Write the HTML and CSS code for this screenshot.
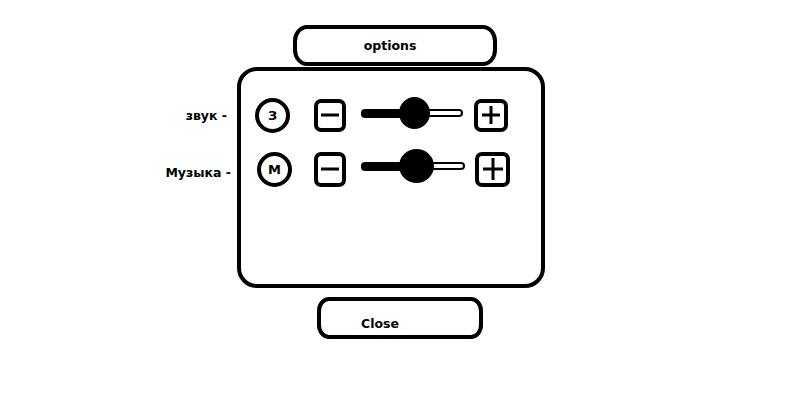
FILE: index.html
```html
<!DOCTYPE html>
<html lang="ru">
<head>
    <meta charset="UTF-8">
    <title>options</title>
    <link rel="stylesheet" href="styles.css">
</head>
<body>

    <div class="screen">
        <div class="btn btn-options">options</div>

        <div class="panel">
            <div class="row">
                <span class="label">звук -</span>
                <span class="badge">З</span>
                <span class="square">
                    <svg width="24" height="24" viewBox="0 0 24 24"><path d="M3 12 H21" stroke="#000" stroke-width="3"/></svg>
                </span>
                <div class="slider">
                    <span class="fill"></span>
                    <span class="knob"></span>
                    <span class="rest"></span>
                </div>
                <span class="square square-plus">
                    <svg width="26" height="24" viewBox="0 0 26 24"><path d="M4 12 H22 M13 3 V21" stroke="#000" stroke-width="3"/></svg>
                </span>
            </div>

            <div class="row row-music">
                <span class="label">Музыка -</span>
                <span class="badge">М</span>
                <span class="square">
                    <svg width="24" height="24" viewBox="0 0 24 24"><path d="M3 12 H21" stroke="#000" stroke-width="3"/></svg>
                </span>
                <div class="slider">
                    <span class="fill"></span>
                    <span class="knob"></span>
                    <span class="rest"></span>
                </div>
                <span class="square square-plus">
                    <svg width="26" height="28" viewBox="0 0 26 28"><path d="M3 14 H23 M13 3 V25" stroke="#000" stroke-width="3"/></svg>
                </span>
            </div>
        </div>

        <div class="btn btn-close">Close</div>
    </div>

</body>
</html>
```

FILE: styles.css
```css
/* options screen */
body { margin: 0; background-color: #ffffff; font-family: 'DejaVu Sans', Tahoma, sans-serif; font-weight: 700; font-size: 12.5px; color: #000; }
.screen { width: 800px; height: 400px; display: flex; flex-direction: column; align-items: flex-start; padding-top: 25px; box-sizing: border-box; }

.btn { box-sizing: border-box; border: 4px solid #000; display: flex; align-items: center; }
.btn-options { margin-left: 293px; width: 204px; height: 41px; border-radius: 14px / 16px; justify-content: center; padding-right: 10px; }
.btn-close { margin-left: 317px; margin-top: 9px; width: 166px; height: 42px; border-radius: 12px / 14px; padding-left: 40px; padding-top: 11px; }

.panel { box-sizing: border-box; margin-left: 237px; margin-top: 1px; width: 308px; height: 221px; border: 4px solid #000; border-radius: 20px; padding: 26px 0 0 14px; display: flex; flex-direction: column; gap: 18px; }

.row { display: flex; align-items: center; height: 36px; }
.label { width: 84px; margin-left: -112px; margin-right: 28px; text-align: right; }
.row-music .label { margin-right: 24px; width: 88px; margin-top: 7px; }
.row-music .badge { margin-left: 2px; }

.badge { box-sizing: border-box; width: 35px; height: 35px; border: 4px solid #000; border-radius: 50%; display: flex; align-items: center; justify-content: center; font-size: 13px; }
.square { box-sizing: border-box; width: 32px; height: 33px; margin-left: 24px; border: 4px solid #000; border-radius: 7px; display: flex; align-items: center; justify-content: center; }
.row-music .square { height: 35px; margin-left: 22px; }
.square-plus { width: 34px; margin-left: 11px; }
.row-music .square-plus { width: 35px; margin-left: 10px; }

.slider { display: flex; align-items: center; width: 102px; margin-left: 15px; margin-top: -4px; }
.row-music .slider { width: 104px; margin-top: -6px; }
.fill { width: 46px; height: 9px; background: #000; border-radius: 4px 0 0 4px; }
.knob { width: 31px; height: 32px; background: #000; border-radius: 50%; margin: 0 -8px; position: relative; z-index: 1; }
.row-music .knob { width: 35px; height: 34px; }
.rest { flex: 1; box-sizing: border-box; height: 8px; border: 2px solid #000; border-left: none; border-radius: 0 4px 4px 0; }
```
